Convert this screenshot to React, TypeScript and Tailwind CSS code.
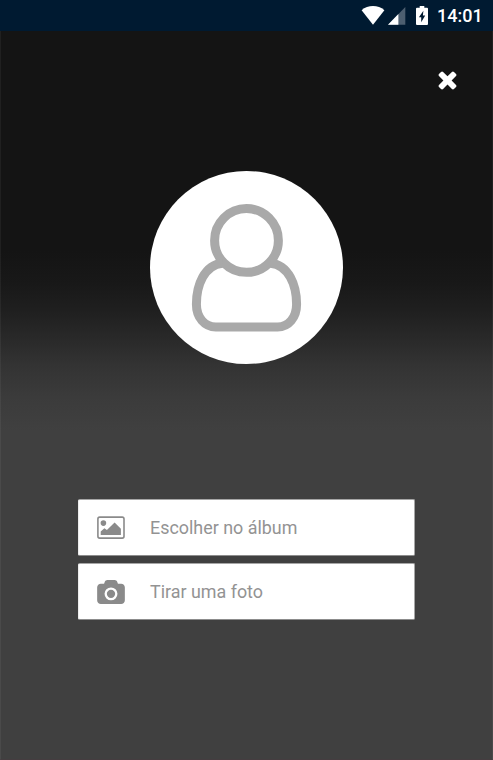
import type { ReactNode } from "react"

interface OptionButtonProps {
  icon: ReactNode
  label: string
}

function StatusBar() {
  return (
    <div className="flex h-[31px] shrink-0 items-center justify-end bg-[#001a31] pr-[11px] text-white">
      <svg className="h-[19px] w-[24px]" viewBox="0 0 24 19" fill="currentColor">
        <path d="M0.6 4.2C7-1.3 17-1.3 23.4 4.2L12 18.7Z" />
      </svg>
      <svg className="ml-[3px] h-[18px] w-[18px]" viewBox="0 0 18 18">
        <path d="M0 17.7 17.3 0V17.7Z" fill="#4d5f70" />
        <path d="M0 17.7 10.4 7.1V17.7Z" fill="#fff" />
      </svg>
      <svg className="ml-[10px] h-[19px] w-[12px]" viewBox="0 0 12 19" fill="currentColor">
        <path
          fillRule="evenodd"
          d="M3.7 0H8.3V1.8H11Q12 1.8 12 2.8V18Q12 19 11 19H1Q0 19 0 18V2.8Q0 1.8 1 1.8H3.7ZM7.4 4.8 2.9 11.2H5.2V16.2L9.2 9.5H6.9Z"
        />
      </svg>
      <span className="ml-[9px] w-[45px] text-[18px] leading-[31px] font-medium">14:01</span>
    </div>
  )
}

function CloseIcon() {
  return (
    <svg className="size-[27px]" viewBox="0 0 1792 1792" fill="currentColor">
      <path d="M1490 1322q0 40-28 68l-136 136q-28 28-68 28t-68-28l-294-294-294 294q-28 28-68 28t-68-28l-136-136q-28-28-28-68t28-68l294-294-294-294q-28-28-28-68t28-68l136-136q28-28 68-28t68 28l294 294 294-294q28-28 68-28t68 28l136 136q28 28 28 68t-28 68l-294 294 294 294q28 28 28 68z" />
    </svg>
  )
}

function UserIcon() {
  return (
    <svg className="size-full" viewBox="15 18 578 578" fill="none" stroke="#a9a9a9" strokeWidth="27">
      <circle cx="304" cy="226" r="95.5" />
      <path d="M232 294C178 299 154 360 154 417C154 457 179 485 212 485H397C430 485 454 457 454 417C454 360 430 299 376 294" />
    </svg>
  )
}

function ImageIcon() {
  return (
    <svg className="h-[23px] w-[28px]" viewBox="0 0 28 23">
      <rect x="0.9" y="1.1" width="26.1" height="21" rx="1.8" fill="none" stroke="#8a8a8a" strokeWidth="1.6" />
      <g fill="#8a8a8a">
        <circle cx="6.4" cy="7.1" r="2.8" />
        <path d="M3.7 15.6 7.4 12.2 9.9 14 17.6 6.6 23.9 12.8V19H3.7Z" />
      </g>
    </svg>
  )
}

function CameraIcon() {
  return (
    <svg className="h-[24px] w-[28px]" viewBox="0 0 1920 1664" fill="#8a8a8a">
      <path d="M960 672q119 0 203.5 84.5t84.5 203.5-84.5 203.5-203.5 84.5-203.5-84.5-84.5-203.5 84.5-203.5 203.5-84.5zm704-416q106 0 181 75t75 181v896q0 106-75 181t-181 75h-1408q-106 0-181-75t-75-181v-896q0-106 75-181t181-75h224l51-136q19-49 69.5-84.5t103.5-35.5h512q53 0 103.5 35.5t69.5 84.5l51 136h224zm-704 1152q185 0 316.5-131.5t131.5-316.5-131.5-316.5-316.5-131.5-316.5 131.5-131.5 316.5 131.5 316.5 316.5 131.5z" />
    </svg>
  )
}

function OptionButton({ icon, label }: OptionButtonProps) {
  return (
    <button className="flex h-[57px] w-full items-center rounded-[2px] border border-t-[#a6a6a6] border-r-[#a6a6a6] border-b-[#8c8c8c] border-l-[#ececec] bg-white pl-[18px] text-left">
      {icon}
      <span className="ml-[25px] text-[17.9px] leading-[27px] text-[#939393]">{label}</span>
    </button>
  )
}

export default function App() {
  return (
    <div className="flex h-[760px] w-[493px] flex-col overflow-hidden bg-[#404040] font-['Roboto',sans-serif]">
      <StatusBar />
      <main className="flex flex-1 flex-col items-center border-r border-b border-l border-r-white/5 border-b-[#453d40] border-l-white/5 bg-[linear-gradient(to_bottom,#141414_220px,#181818_252px,#202020_282px,#2a2a2a_310px,#333333_334px,#3b3b3b_366px,#404040_400px)]">
        <button aria-label="Fechar" className="mt-[35px] mr-[31px] self-end text-white">
          <CloseIcon />
        </button>
        <div className="mt-[78px] size-[193px] shrink-0 rounded-full bg-white">
          <UserIcon />
        </div>
        <div className="mt-[135px] flex w-[337px] flex-col gap-[7px]">
          <OptionButton icon={<ImageIcon />} label="Escolher no álbum" />
          <OptionButton icon={<CameraIcon />} label="Tirar uma foto" />
        </div>
      </main>
    </div>
  )
}
